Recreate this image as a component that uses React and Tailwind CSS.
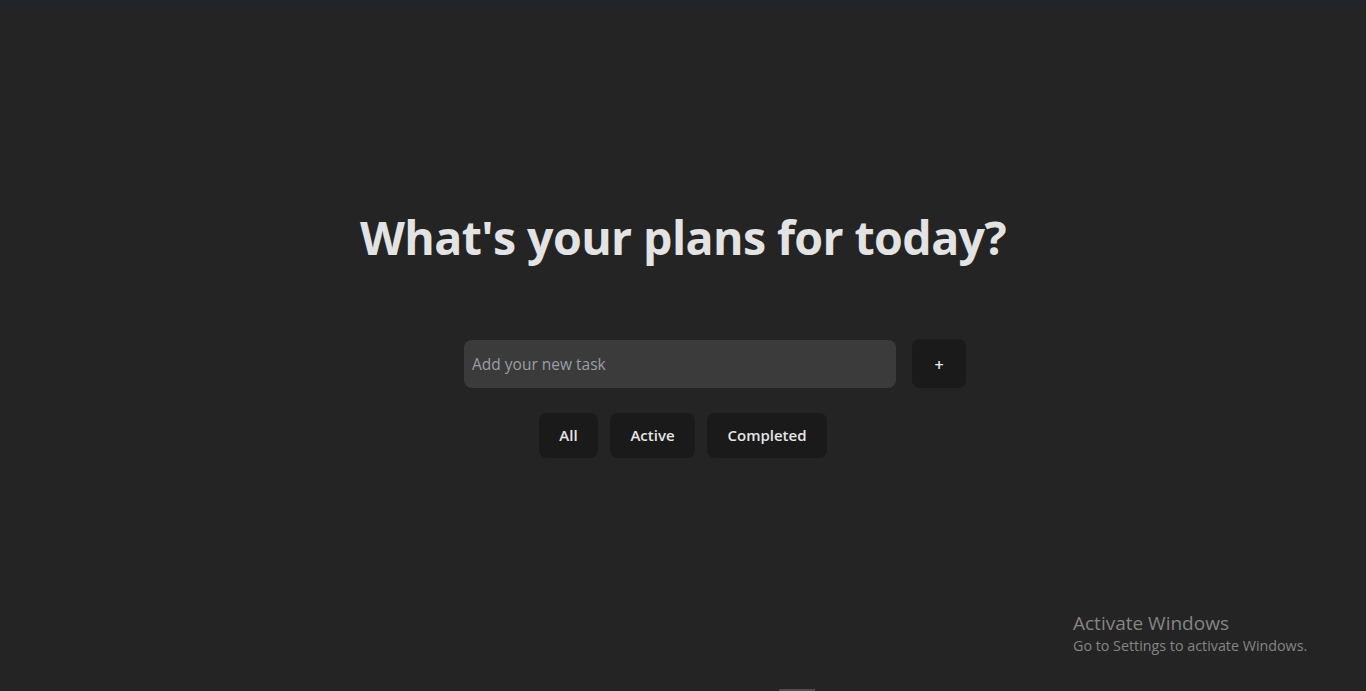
import React from "react";

export default function App() {
  const font = { fontFamily: '"Open Sans", "Noto Sans", sans-serif' };
  return (
    <div className="relative min-h-[691px] h-[691px] w-full overflow-hidden bg-[#242424]" style={font}>
      <div className="absolute left-0 top-0 h-[10px] w-full bg-gradient-to-b from-[#1e252c] to-[#242424]" />
      <div className="flex flex-col items-center pt-[212px]">
        <h1 className="text-[46.5px] font-bold leading-[1.1] text-[#e3e3e3] tracking-[-0.6px]">
          What's your plans for today?
        </h1>
        <div className="mt-[77px] flex pl-[64px] gap-4">
          <input
            type="text"
            placeholder="Add your new task"
            className="h-[48px] w-[432px] rounded-lg bg-[#3b3b3b] px-2 text-[15.5px] text-white outline-none placeholder:text-[#9a9ea6]"
          />
          <button className="h-[49px] w-[54px] -mt-px pt-[3px] rounded-lg bg-[#1a1a1a] text-[16px] font-semibold text-[#ececec]">
            +
          </button>
        </div>
        <div className="mt-[25px] flex gap-3">
          <button className="h-[45px] w-[59px] rounded-lg bg-[#1a1a1a] text-[15px] font-semibold text-[#e6e6e6]">All</button>
          <button className="h-[45px] w-[85px] rounded-lg bg-[#1a1a1a] text-[15px] font-semibold text-[#e6e6e6]">Active</button>
          <button className="h-[45px] w-[120px] rounded-lg bg-[#1a1a1a] text-[15px] font-semibold text-[#e6e6e6]">Completed</button>
        </div>
      </div>
      <div className="absolute left-[1073px] top-[610px] text-[#858585]">
        <div className="text-[19px] leading-[26px]">Activate Windows</div>
        <div className="text-[14.3px] leading-[20px]">Go to Settings to activate Windows.</div>
      </div>
      <div className="absolute bottom-0 left-[779px] h-[2px] w-[36px] bg-[#4d4d4d]" />
    </div>
  );
}
